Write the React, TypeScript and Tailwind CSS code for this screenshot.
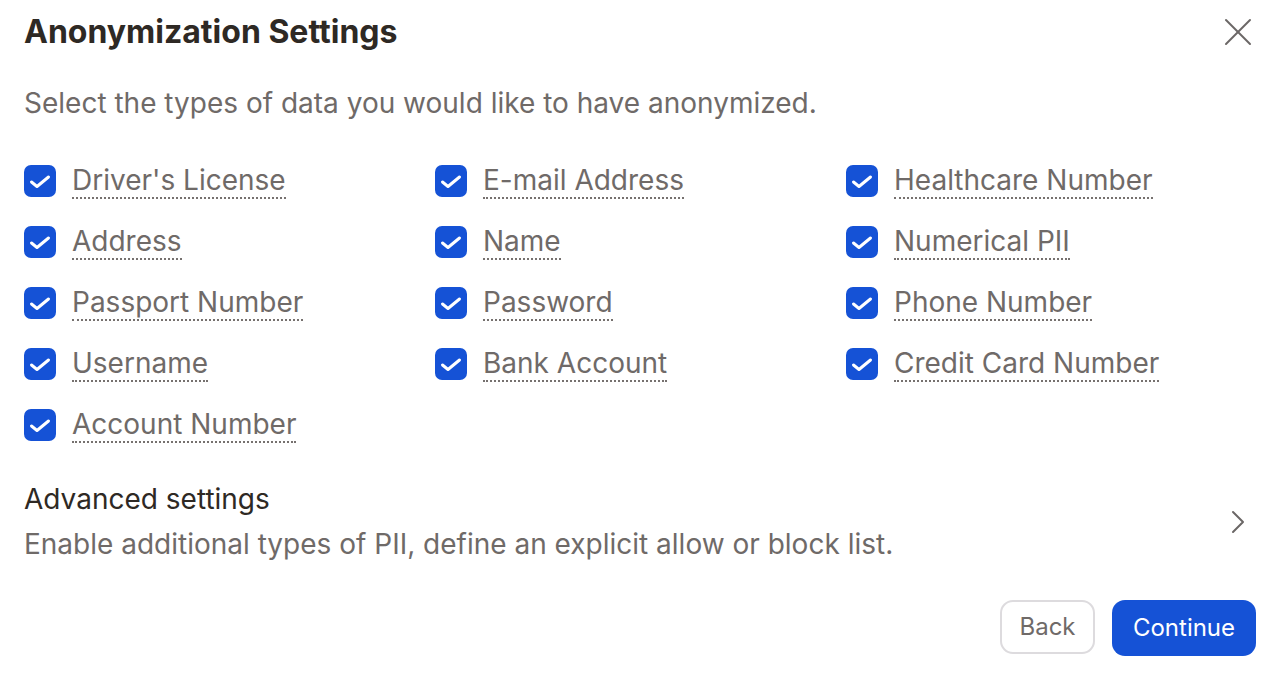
import { X, ChevronRight } from 'lucide-react';

const items = [
  'Driver\'s License', 'E-mail Address', 'Healthcare Number',
  'Address', 'Name', 'Numerical PII',
  'Passport Number', 'Password', 'Phone Number',
  'Username', 'Bank Account', 'Credit Card Number',
  'Account Number',
];

function Check() {
  return (
    <span className="flex h-8 w-8 shrink-0 rounded-[7px] bg-[#1552d6]">
      <svg width="32" height="32" viewBox="0 0 32 32" fill="none">
        <path d="M7.5 17l5.5 4.5L24.5 12" stroke="white" strokeWidth="3" strokeLinecap="round" strokeLinejoin="round" />
      </svg>
    </span>
  );
}

export default function App() {
  return (
    <div className="min-h-[674px] w-[1282px] bg-white px-6 pt-[8px] font-['Inter',sans-serif]">
      <div className="flex items-center justify-between">
        <h1 className="text-[32px] font-bold leading-[38px] text-[#2e2924]">Anonymization Settings</h1>
        <button className="-mr-[4px] text-[#6b6766]">
          <X size={48} strokeWidth={1} />
        </button>
      </div>

      <p className="mt-[30px] text-[28px] leading-[34px] text-[#6f6a68]">Select the types of data you would like to have anonymized.</p>

      <div className="mt-[43px] grid grid-cols-[411px_411px_1fr] gap-y-[25px]">
        {items.map((t) => (
          <label key={t} className="flex items-center gap-4">
            <Check />
            <span className="border-b-2 border-dotted border-[#76716f] text-[28px] leading-[34px] text-[#6f6a68]">{t}</span>
          </label>
        ))}
      </div>

      <div className="mt-[39px] flex items-center justify-between">
        <div>
          <div className="text-[28px] leading-[34px] text-[#2e2924]">Advanced settings</div>
          <div className="mt-[11px] text-[28px] leading-[34px] text-[#6f6a68]">Enable additional types of PII, define an explicit allow or block list.</div>
        </div>
        <ChevronRight size={40} strokeWidth={1.2} className="text-[#6b6766]" />
      </div>

      <div className="mt-[39px] flex justify-end gap-[17px] pr-[2px]">
        <button className="h-[54px] w-[95px] rounded-[13px] border-2 border-[#dddbde] text-[24px] text-[#6f6a68]">Back</button>
        <button className="h-[56px] w-[144px] rounded-[13px] bg-[#1552d6] text-[24px] text-white">Continue</button>
      </div>
    </div>
  );
}
